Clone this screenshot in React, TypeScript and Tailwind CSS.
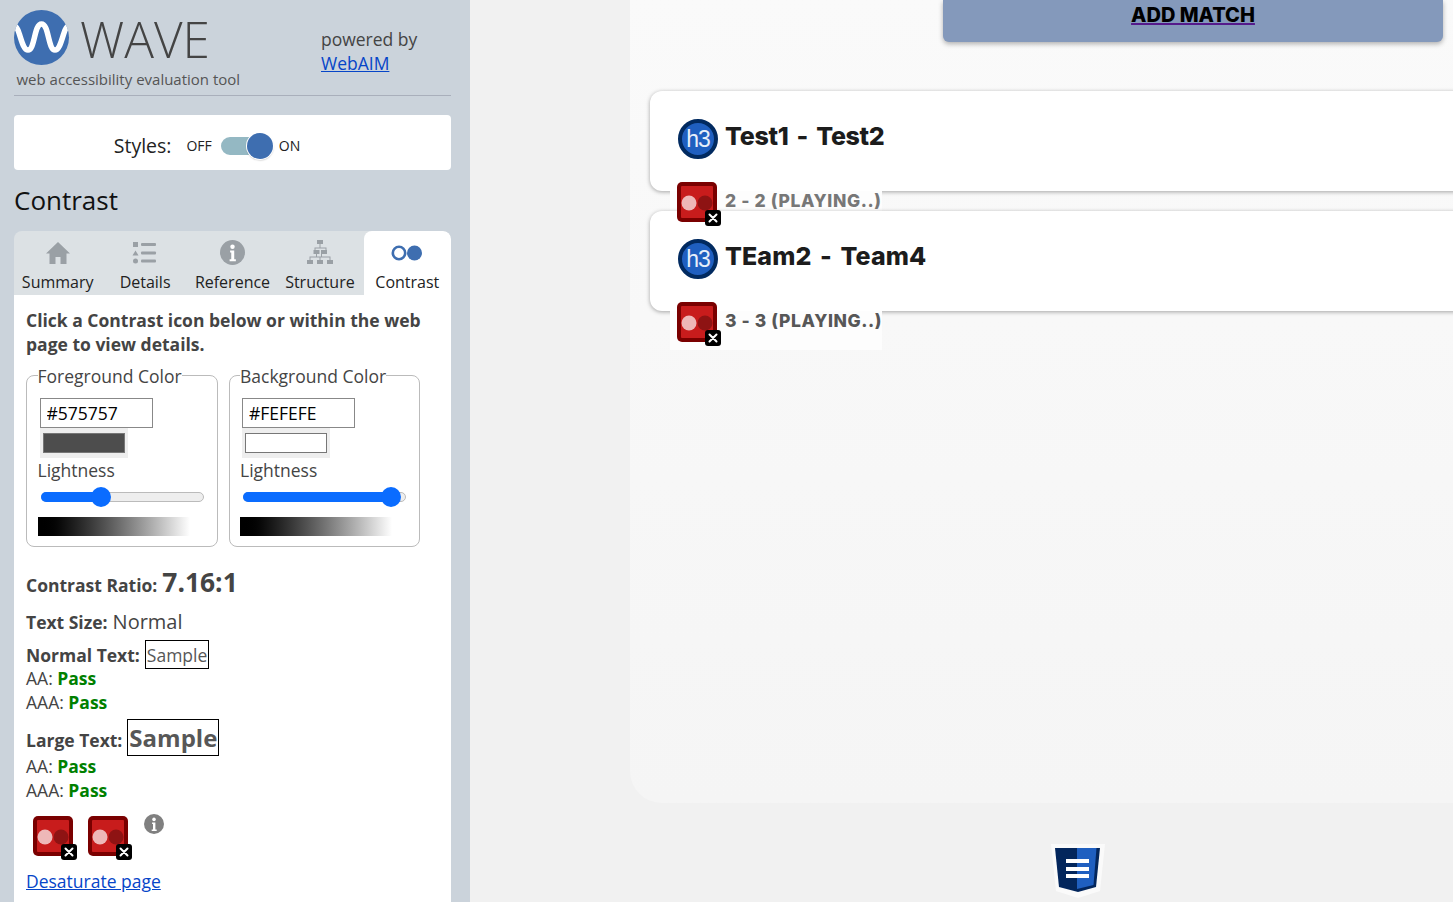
import React from 'react';

const sans = "font-['Open_Sans',sans-serif]";
const display = "font-['Inter',sans-serif]";

function ContrastIcon() {
  return (
    <svg width="44" height="44" viewBox="0 0 44 44" className="block">
      <rect x="0" y="0" width="40" height="40" rx="5" fill="#7a0000" />
      <rect x="4" y="4" width="32" height="32" rx="1" fill="#c81c1c" />
      <circle cx="12" cy="21" r="7.5" fill="#eeb8b8" />
      <circle cx="28" cy="21" r="7.5" fill="#8e1313" />
      <rect x="28" y="28" width="16" height="16" rx="3" fill="#000" />
      <path d="M32.5 32.5l7 7M39.5 32.5l-7 7" stroke="#fff" strokeWidth="2" strokeLinecap="round" />
    </svg>
  );
}

function H3Icon() {
  return (
    <div className="flex h-10 w-10 shrink-0 items-center justify-center rounded-full border-4 border-[#012a60] bg-[#1f5fc0]">
      <span className="font-['Liberation_Sans',sans-serif] text-[23px] font-normal leading-none tracking-[-1px] text-[#e8effa]">h3</span>
    </div>
  );
}

function HouseIcon() {
  return (
    <svg width="26" height="24" viewBox="0 0 26 24" fill="#9aa0a5">
      <path d="M13 1L1 12.5h3.5V23h6v-7h5v7h6V12.5H25z" />
    </svg>
  );
}

function ListIcon() {
  return (
    <svg width="26" height="24" viewBox="0 0 26 24" fill="#9aa0a5">
      <rect x="1" y="1" width="5" height="5" />
      <path d="M3.500 9.500L6.500 14.500H0.500z" />
      <circle cx="3.500" cy="20" r="2.500" />
      <rect x="9" y="2" width="15" height="3" rx="1" />
      <rect x="9" y="10.500" width="15" height="3" rx="1" />
      <rect x="9" y="18.500" width="15" height="3" rx="1" />
    </svg>
  );
}

function InfoIcon({ size, fill }: { size: number; fill: string }) {
  return (
    <svg width={size} height={size} viewBox="0 0 26 26">
      <circle cx="13" cy="13" r="13" fill={fill} />
      <circle cx="13" cy="7" r="2.300" fill="#fff" />
      <path d="M10.500 11h4.300v9h1.700v2h-6.500v-2h1.700v-7h-1.200z" fill="#fff" />
    </svg>
  );
}

function StructureIcon() {
  return (
    <svg width="26" height="25" viewBox="0 0 26 25" fill="#9aa0a5">
      <rect x="10" y="0" width="6" height="4" />
      <rect x="6.500" y="10" width="6" height="4" />
      <rect x="14" y="10" width="6" height="4" />
      <rect x="0" y="20" width="6" height="4" />
      <rect x="10" y="20" width="6" height="4" />
      <rect x="20" y="20" width="6" height="4" />
      <path d="M12.500 4h1v3.500h6V10h-1V8.500h-10V10h-1V7.500h5z" />
      <path d="M9 14h1v2.500h4V14h1v2.500h8.500V20h-1v-2.500h-9V20h-1v-2.500h-9V20h-1v-3.500H9z" />
    </svg>
  );
}

function TabContrastIcon() {
  return (
    <svg width="32" height="16" viewBox="0 0 32 16">
      <circle cx="8" cy="8" r="6.200" fill="none" stroke="#3e6eb0" strokeWidth="2.600" />
      <circle cx="23.500" cy="8" r="7.500" fill="#3e6eb0" />
    </svg>
  );
}

const tabs = [
  { label: 'Summary', icon: <HouseIcon /> },
  { label: 'Details', icon: <ListIcon /> },
  { label: 'Reference', icon: <InfoIcon size={25} fill="#9aa0a5" /> },
  { label: 'Structure', icon: <StructureIcon /> },
];

function ColorField({ legend, hex, swatch, track, thumb }: { legend: string; hex: string; swatch: string; track: string; thumb: string }) {
  return (
    <fieldset className="h-[185px] w-[191.5px] shrink-0 rounded-lg border border-[#bbbbbb] pl-[10.5px]">
      <legend className="pt-[2px] text-[17.5px] leading-6 text-[#444]">{legend}</legend>
      <input
        readOnly
        value={hex}
        className="ml-[2px] mt-[10px] block h-[30px] w-[113px] border border-[#888] bg-white px-[6px] text-[17.5px] text-black outline-none"
      />
      <div className="ml-[2px] flex h-[30px] w-[88px] items-center justify-center bg-[#eeeeee]">
        <div className={`h-5 w-[82px] border border-[#777] ${swatch}`} />
      </div>
      <div className="text-[17.5px] leading-6 text-[#444]">Lightness</div>
      <div className="relative ml-[3px] mt-[10px] h-[10px] w-[163px] rounded-full border border-[#bbb] bg-[#eeeeee]">
        <div className={`absolute -left-px -top-px h-[10px] rounded-full bg-[#0a6cff] ${track}`} />
        <div className={`absolute -top-[6px] h-5 w-5 rounded-full bg-[#0a6cff] ${thumb}`} />
      </div>
      <div className="mt-[15px] h-[19px] w-[152px] bg-gradient-to-r from-black to-white" />
    </fieldset>
  );
}

function Sidebar() {
  return (
    <aside className={`h-[902px] w-[470px] shrink-0 overflow-hidden bg-[#cbd3db] pl-[14px] pr-[19px] ${sans}`}>
      <div className="relative h-[95px]">
        <div className="flex items-start pt-[10px]">
          <svg width="56" height="56" viewBox="0 0 56 56" className="shrink-0">
            <defs>
              <clipPath id="logoClip">
                <circle cx="27.500" cy="27.500" r="27.500" />
              </clipPath>
            </defs>
            <circle cx="27.500" cy="27.500" r="27.500" fill="#3e6eb0" />
            <path
              clipPath="url(#logoClip)"
              d="M0 16C6 16 7 40 14 40C21 40 20 14 27.500 14C35 14 34 40 41 40C48 40 49 16 55 16"
              fill="none"
              stroke="#fff"
              strokeWidth="5.500"
            />
          </svg>
          <span className="ml-[10px] mt-[4px] text-[49.5px] font-light leading-[50px] text-[#444]">WAVE</span>
        </div>
        <div className="absolute left-[2.5px] top-[70px] text-[15px] leading-[18px] text-[#555]">web accessibility evaluation tool</div>
        <div className="absolute left-[307px] top-[27px] text-[17.5px] leading-6 text-[#444]">
          powered by
          <br />
          <a href="#" className="text-[#0645c8] underline">WebAIM</a>
        </div>
      </div>
      <div className="h-px bg-[#a9afbb]" />

      <div className="mt-[19px] flex h-[55px] items-center justify-center rounded bg-white pr-[51px] pt-[6px]">
        <span className="mr-[15px] text-[19.5px] text-[#222]">Styles:</span>
        <span className="mr-[9px] text-[14px] text-[#222]">OFF</span>
        <div className="relative h-[18px] w-[38px] rounded-full bg-[#94b8c3]">
          <div className="absolute -top-[4px] left-[26px] h-[26px] w-[26px] rounded-full bg-[#3e6eb0] shadow-[0_1px_2px_rgba(0,0,0,0.4)] ring-1 ring-white" />
        </div>
        <span className="ml-[20px] text-[14px] text-[#222]">ON</span>
      </div>

      <h2 className="mt-[12px] text-[26px] font-normal leading-9 text-[#111]">Contrast</h2>

      <div className="mt-[13px] grid h-[64px] grid-cols-5 overflow-hidden rounded-t-lg bg-[#dce1e4]">
        {tabs.map((t) => (
          <div key={t.label} className="flex flex-col items-center pt-[9px]">
            <div className="flex h-[25px] items-center">{t.icon}</div>
            <span className="mt-[7px] text-[16px] leading-5 text-[#222]">{t.label}</span>
          </div>
        ))}
        <div className="flex flex-col items-center rounded-t-lg bg-white pt-[9px]">
          <div className="flex h-[25px] items-center">
            <TabContrastIcon />
          </div>
          <span className="mt-[7px] text-[16px] leading-5 text-[#222]">Contrast</span>
        </div>
      </div>

      <div className="h-[700px] bg-white px-3 pt-[13px] text-[#444]">
        <p className="w-[400px] text-[17.5px] font-bold leading-6">Click a Contrast icon below or within the web page to view details.</p>

        <div className="mt-[6px] flex gap-[11px]">
          <ColorField legend="Foreground Color" hex="#575757" swatch="bg-[#4d4d4d]" track="w-[60px]" thumb="left-[49px]" />
          <ColorField legend="Background Color" hex="#FEFEFE" swatch="bg-white" track="w-[150px]" thumb="left-[137px]" />
        </div>

        <div className="mt-[17px] flex items-baseline gap-[5px] leading-9">
          <span className="text-[17.5px] font-bold">Contrast Ratio:</span>
          <span className="text-[26.4px] font-bold">7.16:1</span>
        </div>
        <div className="mt-[5px] flex items-baseline gap-[5px] leading-7">
          <span className="text-[17.5px] font-bold">Text Size:</span>
          <span className="text-[20px]">Normal</span>
        </div>
        <div className="mb-[-3px] mt-[4px] flex items-center gap-[5px] text-[17.5px] leading-6">
          <span className="font-bold">Normal Text:</span>
          <span className="flex h-[29px] items-center border border-black px-px text-[#575757]">Sample</span>
        </div>
        <div className="text-[17.5px] leading-6">AA: <b className="text-[#008000]">Pass</b></div>
        <div className="text-[17.5px] leading-6">AAA: <b className="text-[#008000]">Pass</b></div>
        <div className="mb-[-2px] mt-[5px] flex items-center gap-[5px] text-[17.5px] leading-6">
          <span className="pt-[4px] font-bold">Large Text:</span>
          <span className="flex h-[37px] items-center border border-black px-px text-[24px] font-bold text-[#575757]">Sample</span>
        </div>
        <div className="text-[17.5px] leading-6">AA: <b className="text-[#008000]">Pass</b></div>
        <div className="text-[17.5px] leading-6">AAA: <b className="text-[#008000]">Pass</b></div>

        <div className="mt-[10px] flex items-start pl-[7px]">
          <div className="pt-[4px]"><ContrastIcon /></div>
          <div className="ml-[11px] pt-[4px]"><ContrastIcon /></div>
          <div className="ml-[12px] pt-[2px]"><InfoIcon size={20} fill="#808080" /></div>
        </div>
        <a href="#" className="mt-[9px] block text-[17.5px] leading-6 text-[#0645c8] underline">Desaturate page</a>
      </div>
    </aside>
  );
}

function MatchCard({ title, titleTracking, score, scoreColor }: { title: string; titleTracking: string; score: string; scoreColor: string }) {
  return (
    <div className="relative h-[100px] w-[900px] rounded-l-xl bg-white shadow-[0_1px_4px_rgba(0,0,0,0.35)]">
      <div className="flex items-start gap-[7px] pl-[28px] pt-[28px]">
        <H3Icon />
        <h3 className={`${display} text-[25px] font-extrabold leading-[34px] text-[#1c1c1c] [word-spacing:3px] ${titleTracking}`}>{title}</h3>
      </div>
      <div className="absolute left-[20px] top-[100px] flex h-[39px] items-start bg-[#fdfdfd] pl-[7px]">
        <div className="relative z-10 -mt-[9px] h-[44px] w-[44px] shrink-0">
          <ContrastIcon />
        </div>
        <span className={`${display} relative z-10 ml-[4px] text-[17.5px] font-extrabold leading-[20px] tracking-[0.6px] ${scoreColor}`}>{score}</span>
      </div>
    </div>
  );
}

export default function App() {
  return (
    <div className="flex h-[902px] w-[1453px] overflow-hidden bg-[#f1f1f1]">
      <Sidebar />
      <main className="min-w-0 flex-1">
        <div className="ml-[160px] h-[803px] overflow-hidden rounded-bl-[32px] bg-gradient-to-b from-[#fafafa] to-[#f5f5f5]">
          <div className="ml-[313px] flex h-[42px] w-[500px] justify-center rounded-b-md bg-[#8499bb] shadow-[0_2px_5px_rgba(0,0,0,0.3)]">
            <a href="#" className={`${display} text-[20px] font-extrabold leading-[30px] text-black underline decoration-[#551a8b] decoration-2`}>ADD MATCH</a>
          </div>
          <div className="ml-[20px] mt-[49px] flex flex-col gap-5">
            <MatchCard title="Test1 - Test2" titleTracking="tracking-[-0.3px]" score="2 - 2 (PLAYING..)" scoreColor="text-[#777]" />
            <MatchCard title="TEam2 - Team4" titleTracking="tracking-[0.1px]" score="3 - 3 (PLAYING..)" scoreColor="text-[#575757]" />
          </div>
        </div>
        <svg width="54" height="54" viewBox="0 0 54 54" className="ml-[581px] mt-[41px]">
          <path d="M0 0H54L49 47L27 54L5 47Z" fill="#fafafa" />
          <path d="M4 4H49L45 43L27 48L8 43Z" fill="#03265c" />
          <path d="M26 4H45.500L42.500 41L26 45Z" fill="#1f5fc0" />
          <rect x="15" y="15" width="23" height="4" fill="#fff" />
          <rect x="15" y="23" width="23" height="4" fill="#fff" />
          <rect x="15" y="30" width="23" height="4" fill="#fff" />
        </svg>
      </main>
    </div>
  );
}
